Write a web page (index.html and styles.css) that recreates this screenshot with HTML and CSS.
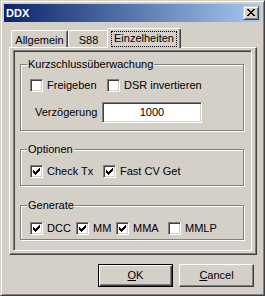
FILE: index.html
```html
<!DOCTYPE html>
<html>
<head>
<meta charset="utf-8">
<title>DDX</title>
<link rel="stylesheet" href="styles.css">
</head>
<body>
<div class="window">
  <div class="titlebar">
    <span class="title">DDX</span>
    <span class="capbtn"><svg width="8" height="7" viewBox="0 0 8 7" shape-rendering="crispEdges"><path fill="#000" d="M0 0h2v1H0zM6 0h2v1H6zM1 1h2v1H1zM5 1h2v1H5zM2 2h4v1H2zM3 3h2v1H3zM2 4h4v1H2zM1 5h2v1H1zM5 5h2v1H5zM0 6h2v1H0zM6 6h2v1H6z"/></svg></span>
  </div>
  <div class="client">
    <div class="tabs">
      <div class="tab t1">Allgemein</div>
      <div class="tab t2">S88</div>
      <div class="tab t3 sel"><span class="focus">Einzelheiten</span></div>
    </div>
    <div class="panel">
      <div class="page">
        <div class="group g1">
          <div class="legend">Kurzschlussüberwachung</div>
          <div class="row r1">
            <span class="cb w77"><span class="box"></span>Freigeben</span>
            <span class="cb"><span class="box"></span>DSR invertieren</span>
          </div>
          <div class="row r2">
            <span class="lbl">Verzögerung</span>
            <span class="edit">1000</span>
          </div>
        </div>
        <div class="group g2">
          <div class="legend">Optionen</div>
          <div class="row r3">
            <span class="cb w73"><span class="box"><svg class="chk" width="7" height="7" viewBox="0 0 7 7" shape-rendering="crispEdges"><path d="M6 0h1v1H6zM5 1h2v1H5zM0 2h1v1H0zM4 2h3v1H4zM0 3h2v1H0zM3 3h3v1H3zM0 4h5v1H0zM1 5h3v1H1zM2 6h1v1H2z"/></svg></span>Check Tx</span>
            <span class="cb"><span class="box"><svg class="chk" width="7" height="7" viewBox="0 0 7 7" shape-rendering="crispEdges"><path d="M6 0h1v1H6zM5 1h2v1H5zM0 2h1v1H0zM4 2h3v1H4zM0 3h2v1H0zM3 3h3v1H3zM0 4h5v1H0zM1 5h3v1H1zM2 6h1v1H2z"/></svg></span>Fast CV Get</span>
          </div>
        </div>
        <div class="group g3">
          <div class="legend">Generate</div>
          <div class="row r4">
            <span class="cb w46"><span class="box"><svg class="chk" width="7" height="7" viewBox="0 0 7 7" shape-rendering="crispEdges"><path d="M6 0h1v1H6zM5 1h2v1H5zM0 2h1v1H0zM4 2h3v1H4zM0 3h2v1H0zM3 3h3v1H3zM0 4h5v1H0zM1 5h3v1H1zM2 6h1v1H2z"/></svg></span>DCC</span>
            <span class="cb w40"><span class="box"><svg class="chk" width="7" height="7" viewBox="0 0 7 7" shape-rendering="crispEdges"><path d="M6 0h1v1H6zM5 1h2v1H5zM0 2h1v1H0zM4 2h3v1H4zM0 3h2v1H0zM3 3h3v1H3zM0 4h5v1H0zM1 5h3v1H1zM2 6h1v1H2z"/></svg></span>MM</span>
            <span class="cb w52"><span class="box"><svg class="chk" width="7" height="7" viewBox="0 0 7 7" shape-rendering="crispEdges"><path d="M6 0h1v1H6zM5 1h2v1H5zM0 2h1v1H0zM4 2h3v1H4zM0 3h2v1H0zM3 3h3v1H3zM0 4h5v1H0zM1 5h3v1H1zM2 6h1v1H2z"/></svg></span>MMA</span>
            <span class="cb"><span class="box"></span>MMLP</span>
          </div>
        </div>
      </div>
    </div>
    <div class="buttons">
      <button class="btn default"><u>O</u>K</button>
      <button class="btn"><u>C</u>ancel</button>
    </div>
  </div>
</div>
</body>
</html>
```
FILE: styles.css
```css
html, body {
  margin: 0;
  padding: 0;
  background: #d4d0c8;
}
body {
  font-family: "Liberation Sans", Arial, sans-serif;
  font-size: 11px;
  line-height: 13px;
  color: #000;
}
.window {
  box-sizing: border-box;
  width: 265px;
  height: 296px;
  border: 1px solid;
  border-color: #d4d0c8 #404040 #404040 #d4d0c8;
  box-shadow: inset 1px 1px #fff, inset -1px -1px #808080;
  padding: 3px;
  background: #d4d0c8;
  display: flex;
  flex-direction: column;
}
.titlebar {
  height: 18px;
  flex: none;
  background: linear-gradient(to right, #0a246a, #a6caf0);
  display: flex;
  align-items: center;
  justify-content: space-between;
  padding: 0 2px 0 2px;
}
.title {
  color: #fff;
  font-weight: bold;
  font-size: 11px;
}
.capbtn {
  box-sizing: border-box;
  width: 16px;
  height: 14px;
  border: 1px solid;
  border-color: #d4d0c8 #404040 #404040 #d4d0c8;
  box-shadow: inset 1px 1px #fff, inset -1px -1px #808080;
  background: #d4d0c8;
  padding: 2px 0 0 3px;
}
.capbtn svg { display: block; }
.client {
  flex: 1;
  padding: 6px 4px 0 5px;
}
.tabs {
  display: flex;
  align-items: flex-end;
  height: 19px;
  padding-left: 2px;
}
.tab {
  box-sizing: border-box;
  height: 17px;
  border-top: 1px solid #fff;
  border-left: 1px solid #fff;
  border-right: 1px solid #404040;
  box-shadow: inset -1px 0 #808080;
  border-radius: 2px 2px 0 0;
  text-align: center;
  padding-top: 3px;
  background: #d4d0c8;
}
.t1 { width: 57px; }
.t2 { width: 41px; }
.t3 { width: 70px; }
.tab.sel {
  width: 74px;
  height: 20px;
  margin: 0 -2px -1px -2px;
  position: relative;
  z-index: 1;
}
.focus {
  display: inline-block;
  border: 1px dotted #000;
  padding: 0 2px 1px 2px;
  margin-top: -1px;
}
.panel {
  box-sizing: border-box;
  height: 208px;
  border: 1px solid;
  border-color: #fff #404040 #404040 #fff;
  box-shadow: inset -1px -1px #808080;
  padding: 2px 4px 3px 3px;
}
.page {
  box-sizing: border-box;
  height: 201px;
  border: 1px solid;
  border-color: #808080 #fff #fff #808080;
  box-shadow: inset 1px 1px #404040, inset -1px -1px #d4d0c8;
  padding: 13px 0 0 6px;
}
.group {
  box-sizing: border-box;
  width: 224px;
  border: 1px solid #808080;
  box-shadow: inset 1px 1px #fff, 1px 1px #fff;
  padding-left: 9px;
}
.g1 { height: 67px; }
.g2 { height: 37px; margin-top: 18px; }
.g3 { height: 35px; margin-top: 19px; }
.legend {
  width: fit-content;
  margin: -7px 0 0 -3px;
  padding: 0 1px;
  background: #d4d0c8;
}
.row {
  display: flex;
  align-items: center;
}
.r1 { margin-top: 8px; height: 13px; }
.r2 { margin-top: 10px; height: 21px; }
.r3 { margin-top: 9px; height: 13px; }
.r4 { margin-top: 10px; height: 13px; }
.cb {
  display: flex;
  align-items: center;
  white-space: nowrap;
}
.w77 { width: 77px; }
.w73 { width: 73px; }
.w46 { width: 46px; }
.w40 { width: 40px; }
.w52 { width: 52px; }
.box {
  box-sizing: border-box;
  width: 13px;
  height: 13px;
  border: 1px solid;
  border-color: #808080 #fff #fff #808080;
  box-shadow: inset 1px 1px #404040, inset -1px -1px #d4d0c8;
  background: #fff;
  margin-right: 4px;
  padding: 2px;
  flex: none;
}
.chk { display: block; }
.lbl {
  width: 72px;
  padding-left: 5px;
  box-sizing: border-box;
  flex: none;
}
.edit {
  box-sizing: border-box;
  width: 100px;
  height: 21px;
  border: 1px solid;
  border-color: #808080 #fff #fff #808080;
  box-shadow: inset 1px 1px #404040, inset -1px -1px #d4d0c8;
  background: #fff;
  display: flex;
  align-items: center;
  justify-content: center;
}
.buttons {
  display: flex;
  justify-content: flex-end;
  gap: 6px;
  margin-top: 9px;
  padding-right: 3px;
}
.btn {
  box-sizing: border-box;
  width: 75px;
  height: 23px;
  font: inherit;
  color: #000;
  background: #d4d0c8;
  border: 1px solid;
  border-color: #fff #404040 #404040 #fff;
  box-shadow: inset -1px -1px #808080, inset 1px 1px #d4d0c8;
  padding: 0;
  margin: 0;
}
.btn.default {
  border: 1px solid #000;
  box-shadow: inset 1px 1px #fff, inset -1px -1px #404040, inset -2px -2px #808080;
}
.btn u { text-decoration: underline; text-underline-offset: 1px; }
```
